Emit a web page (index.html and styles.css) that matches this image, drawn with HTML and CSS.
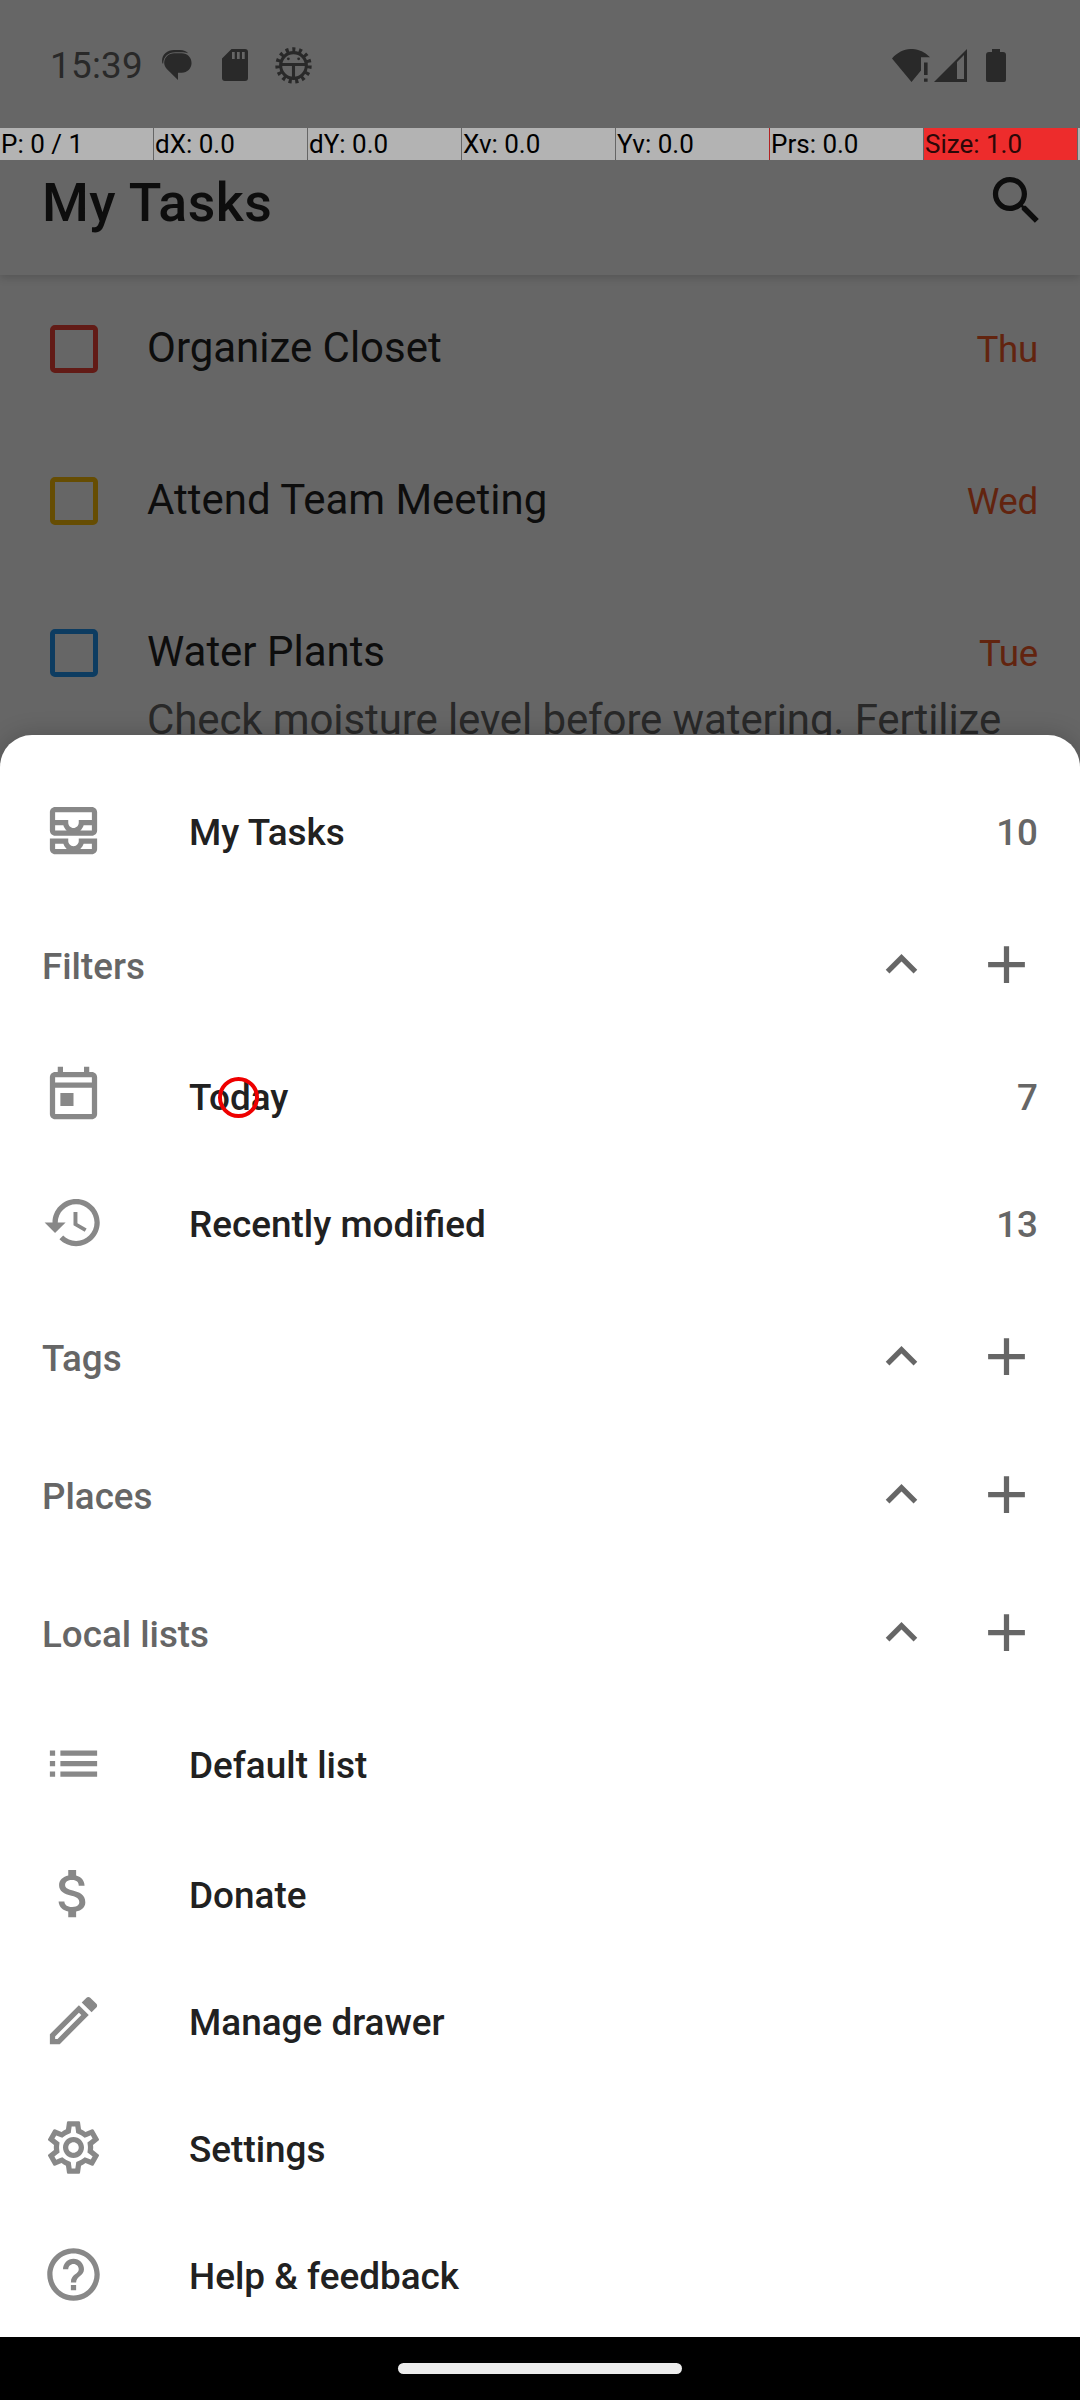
FILE: index.html
```html
<!DOCTYPE html>
<html lang="en">
<head>
<meta charset="utf-8">
<title>My Tasks</title>
<link rel="stylesheet" href="styles.css">
</head>
<body>
<svg width="0" height="0" class="defs">
  <symbol id="chevron" viewBox="0 0 24 24"><path d="M12 8l-6 6 1.410 1.410L12 10.830l4.590 4.580L18 14z"/></symbol>
  <symbol id="plus" viewBox="0 0 24 24"><path d="M19 13h-6v6h-2v-6H5v-2h6V5h2v6h6v2z"/></symbol>
</svg>
<div class="screen">
  <header class="status">
    <span class="clock">15:39</span>
    <svg class="st-chat" viewBox="0 0 32 33"><path d="M1 15C-1 7 5 1 13 1h6c4 0 7 1.500 8.500 3.500C25 3.600 23 3.400 21 3.400h-6.500C7 3.400 2 8 1.800 15z"/><path d="M13 4.500h8c5.500 0 10 4.300 10 10s-4.500 10-10 10h-4V32L5.500 20.500C3.800 18.700 2.800 16.500 2.800 14.500 2.800 8.800 7.500 4.500 13 4.500z"/></svg>
    <svg class="st-sd" viewBox="0 0 26 32"><path fill-rule="evenodd" d="M9.500 0H23a3 3 0 0 1 3 3v26a3 3 0 0 1-3 3H3a3 3 0 0 1-3-3V9.500zM10 3v7h2.700V3zM15 3v7h2.700V3zM20 3v7h2.700V3z"/></svg>
    <svg class="st-bug" viewBox="-18 -18 36 36"><circle class="teeth" r="15.500"/><circle class="ring" r="12.500"/><path class="bars" d="M-12 -1H12M0 -1V13"/><circle cx="-5" cy="-6.500" r="1.400"/><circle cx="5" cy="-6.500" r="1.400"/></svg>
    <span class="spacer"></span>
    <svg class="st-wifi" viewBox="0 0 38 33"><path d="M0 9.500C11-3 27-3 38 8.300h-9V21.500L19.500 33z"/><path d="M32 13.500h3.600v12.500H32zM32 29.500h3.600v3.300H32z"/></svg>
    <svg class="st-cell" viewBox="0 0 33 33"><path fill-rule="evenodd" d="M33 0v33H0zM23 13v17h7V6z"/></svg>
    <svg class="st-batt" viewBox="0 0 20 33"><path d="M6 0h8v3h3a3 3 0 0 1 3 3v25a2 2 0 0 1-2 2H2a2 2 0 0 1-2-2V6a3 3 0 0 1 3-3h3z"/></svg>
  </header>
  <div class="pointer">
    <span>P: 0 / 1</span><span>dX: 0.0</span><span>dY: 0.0</span><span>Xv: 0.0</span><span class="pressed">Yv: 0.0</span><span>Prs: 0.0</span><span class="size">Size: 1.0</span><i></i>
  </div>
  <div class="appbar">
    <h1>My Tasks</h1>
    <svg class="icon" viewBox="0 0 24 24"><path d="M15.500 14h-.79l-.28-.27C15.410 12.590 16 11.110 16 9.500 16 5.910 13.090 3 9.500 3S3 5.910 3 9.500 5.910 16 9.500 16c1.610 0 3.090-.59 4.230-1.570l.27.28v.79l5 4.990L20.490 19l-4.990-5zm-6 0C7.010 14 5 11.990 5 9.500S7.010 5 9.500 5 14 7.010 14 9.500 11.990 14 9.500 14z"/></svg>
  </div>
  <main class="tasks">
    <div class="task"><i class="box red"></i><p>Organize Closet</p><time>Thu</time></div>
    <div class="task"><i class="box yellow"></i><p>Attend Team Meeting</p><time>Wed</time></div>
    <div class="task"><i class="box blue"></i><p>Water Plants</p><time>Tue</time></div>
    <p class="note">Check moisture level before watering. Fertilize</p>
  </main>
  <nav class="sheet">
    <div class="item"><svg class="icon" viewBox="0 0 24 24"><path d="M19 3H5c-1.100 0-2 .9-2 2v7c0 1.100.9 2 2 2h14c1.100 0 2-.9 2-2V5c0-1.100-.9-2-2-2zM5 10h3.130c.21.78.67 1.470 1.270 2H5v-2zm14 2h-4.400c.6-.53 1.060-1.220 1.270-2H19v2zm0-4h-5v1c0 1.070-.93 2-2 2s-2-.93-2-2V8H5V5h14v3zm-5 7v1c0 .47-.19.9-.48 1.250-.37.45-.92.75-1.520.75s-1.150-.3-1.520-.75c-.29-.35-.48-.78-.48-1.250v-1H3v4c0 1.100.9 2 2 2h14c1.100 0 2-.9 2-2v-4h-7zm-9 2h3.130c.02.09.06.17.09.25.24.68.65 1.280 1.180 1.750H5v-2zm14 2h-4.400c.54-.47.95-1.070 1.180-1.750.03-.08.07-.16.09-.25H19v2z"/></svg><span>My Tasks</span><b>10</b></div>
    <div class="group"><span>Filters</span><svg class="icon"><use href="#chevron"/></svg><svg class="icon"><use href="#plus"/></svg></div>
    <div class="item"><svg class="icon" viewBox="0 0 24 24"><path d="M19 3h-1V1h-2v2H8V1H6v2H5c-1.110 0-2 .9-2 2v14c0 1.100.89 2 2 2h14c1.100 0 2-.9 2-2V5c0-1.100-.9-2-2-2zm0 16H5V9h14v10zm0-12H5V5h14v2zM7 11h5v5H7z"/></svg><span class="touched">Today</span><b>7</b></div>
    <div class="item"><svg class="icon" viewBox="0 0 24 24"><path d="M13 3c-4.970 0-9 4.030-9 9H1l3.890 3.890.07.14L9 12H6c0-3.870 3.130-7 7-7s7 3.130 7 7-3.130 7-7 7c-1.930 0-3.680-.79-4.940-2.060l-1.420 1.420C8.270 19.990 10.510 21 13 21c4.970 0 9-4.030 9-9s-4.030-9-9-9zm-1 5v5l4.280 2.540.72-1.210-3.500-2.080V8H12z"/></svg><span>Recently modified</span><b>13</b></div>
    <div class="group"><span>Tags</span><svg class="icon"><use href="#chevron"/></svg><svg class="icon"><use href="#plus"/></svg></div>
    <div class="group"><span>Places</span><svg class="icon"><use href="#chevron"/></svg><svg class="icon"><use href="#plus"/></svg></div>
    <div class="group"><span>Local lists</span><svg class="icon"><use href="#chevron"/></svg><svg class="icon"><use href="#plus"/></svg></div>
    <div class="item"><svg class="icon" viewBox="0 0 24 24"><path d="M3 13h2v-2H3v2zm0 4h2v-2H3v2zm0-8h2V7H3v2zm4 4h14v-2H7v2zm0 4h14v-2H7v2zM7 7v2h14V7H7z"/></svg><span>Default list</span></div>
    <div class="item footer-start"><svg class="icon" viewBox="0 0 24 24"><path d="M11.800 10.900c-2.270-.59-3-1.200-3-2.150 0-1.090 1.010-1.850 2.700-1.850 1.780 0 2.440.85 2.500 2.100h2.210c-.07-1.720-1.120-3.300-3.210-3.810V3h-3v2.160c-1.940.42-3.500 1.680-3.500 3.610 0 2.310 1.910 3.460 4.700 4.130 2.500.6 3 1.480 3 2.410 0 .69-.49 1.790-2.700 1.790-2.060 0-2.870-.92-2.980-2.100h-2.200c.12 2.190 1.760 3.420 3.680 3.830V21h3v-2.150c1.950-.37 3.500-1.500 3.500-3.550 0-2.840-2.430-3.810-4.700-4.400z"/></svg><span>Donate</span></div>
    <div class="item"><svg class="icon" viewBox="0 0 24 24"><path d="M14.060 9.020l.92.92L5.920 19H5v-.92l9.060-9.060M17.660 3c-.25 0-.51.1-.7.29l-1.830 1.830 3.750 3.750 1.830-1.830c.39-.39.39-1.020 0-1.410l-2.340-2.340c-.2-.2-.45-.29-.71-.29zm-3.600 3.190L3 17.250V21h3.750L17.810 9.940l-3.750-3.750z"/></svg><span>Manage drawer</span></div>
    <div class="item"><svg class="icon" viewBox="0 0 24 24"><path d="M19.430 12.980c.04-.32.07-.64.07-.98 0-.34-.03-.66-.07-.98l2.110-1.650c.19-.15.24-.42.12-.64l-2-3.460c-.09-.16-.26-.25-.44-.25-.06 0-.12.01-.17.03l-2.490 1c-.52-.4-1.080-.73-1.690-.98l-.38-2.650C14.460 2.180 14.250 2 14 2h-4c-.25 0-.46.18-.49.42l-.38 2.650c-.61.25-1.170.59-1.690.98l-2.490-1c-.06-.02-.12-.03-.18-.03-.17 0-.34.09-.43.25l-2 3.460c-.13.22-.07.49.12.64l2.110 1.650c-.04.32-.07.65-.07.98 0 .33.03.66.07.98l-2.110 1.650c-.19.15-.24.42-.12.64l2 3.460c.09.16.26.25.44.25.06 0 .12-.01.17-.03l2.490-1c.52.4 1.080.73 1.690.98l.38 2.650c.03.24.24.42.49.42h4c.25 0 .46-.18.49-.42l.38-2.650c.61-.25 1.170-.59 1.690-.98l2.490 1c.06.02.12.03.18.03.17 0 .34-.09.43-.25l2-3.460c.12-.22.07-.49-.12-.64l-2.110-1.650zm-1.980-1.710c.04.31.05.52.05.73 0 .21-.02.43-.05.73l-.14 1.130.89.7 1.080.84-.7 1.210-1.270-.51-1.040-.42-.9.68c-.43.32-.84.56-1.250.73l-1.060.43-.16 1.130-.2 1.350h-1.400l-.19-1.350-.16-1.130-1.060-.43c-.43-.18-.83-.41-1.230-.71l-.91-.7-1.060.43-1.270.51-.7-1.210 1.080-.84.89-.7-.14-1.130c-.03-.31-.05-.54-.05-.74s.02-.43.05-.73l.14-1.130-.89-.7-1.080-.84.7-1.210 1.270.51 1.040.42.9-.68c.43-.32.84-.56 1.250-.73l1.060-.43.16-1.130.2-1.350h1.390l.19 1.350.16 1.130 1.060.43c.43.18.83.41 1.230.71l.91.7 1.060-.43 1.270-.51.7 1.210-1.070.85-.89.7.14 1.130zM12 8c-2.210 0-4 1.790-4 4s1.790 4 4 4 4-1.790 4-4-1.790-4-4-4zm0 6c-1.100 0-2-.9-2-2s.9-2 2-2 2 .9 2 2-.9 2-2 2z"/></svg><span>Settings</span></div>
    <div class="item"><svg class="icon" viewBox="0 0 24 24"><path d="M11 18h2v-2h-2v2zm1-16C6.480 2 2 6.480 2 12s4.480 10 10 10 10-4.480 10-10S17.520 2 12 2zm0 18c-4.410 0-8-3.590-8-8s3.590-8 8-8 8 3.590 8 8-3.590 8-8 8zm0-14c-2.210 0-4 1.790-4 4h2c0-1.100.9-2 2-2s2 .9 2 2c0 2-3 1.750-3 5h2c0-2.250 3-2.500 3-5 0-2.210-1.790-4-4-4z"/></svg><span>Help &amp; feedback</span></div>
  </nav>
  <footer class="navbar"><i></i></footer>
</div>
</body>
</html>
```
FILE: styles.css
```css
* { box-sizing: border-box; margin: 0; }
body { background: #666; font-family: Roboto, sans-serif; }
.defs { display: none; }
.screen {
  width: 1080px; height: 2400px; overflow: hidden;
  display: flex; flex-direction: column; background: #666;
}
.icon { width: 63px; height: 63px; flex: none; display: block; }

.status {
  height: 128px; flex: none; display: flex; align-items: center;
  padding: 2px 74px 0 50px; color: #292929; fill: #292929;
}
.clock { font-size: 36.75px; line-height: 44px; width: 111px; padding-top: 2px; letter-spacing: .3px; }
.status svg { flex: none; display: block; }
.st-chat { width: 32px; height: 32px; }
.st-sd { width: 26px; height: 32px; margin-left: 29px; }
.st-bug { width: 37px; height: 37px; margin-left: 27px; }
.st-bug .teeth { fill: none; stroke: #292929; stroke-width: 4.4; stroke-dasharray: 3 3.49; }
.st-bug .ring, .st-bug .bars { fill: none; stroke: #292929; stroke-width: 3; }
.spacer { flex: 1; }
.st-wifi { width: 38px; height: 33px; }
.st-cell { width: 33px; height: 33px; margin-left: 4px; }
.st-batt { width: 20px; height: 33px; margin-left: 19px; }

.pointer { height: 32px; flex: none; display: flex; gap: 1px; position: relative; z-index: 1; }
.pointer span {
  width: 153px; background: #b3b3b3; color: #000;
  font-size: 26px; line-height: 32px; padding-left: 1px; white-space: nowrap;
}
.pointer i { flex: 1; background: #b3b3b3; }
.pointer .pressed { box-shadow: 1px 0 #b22222; }
.pointer .size { background: #ed2c2c; color: #2b0808; }

.appbar {
  height: 115px; flex: none; display: flex; justify-content: space-between;
  padding: 9px 32px 0 42px; box-shadow: 0 3px 8px rgba(0, 0, 0, .16); fill: #0d0d0d;
}
.appbar h1 {
  font-size: 53.6px; line-height: 62px; font-weight: 500; color: #0d0d0d;
  padding-top: 3px; letter-spacing: .5px;
}

.tasks { height: 460px; flex: none; overflow: hidden; padding: 0 42px; color: #0d0d0d; }
.task { height: 152px; display: flex; align-items: baseline; padding-top: 48px; }
.box {
  width: 48px; height: 48px; border: 5px solid; border-radius: 5px;
  margin: 2px 49px 0 8px; flex: none; align-self: flex-start;
}
.red { border-color: #621b16; }
.yellow { border-color: #664d03; }
.blue { border-color: #0d3c61; }
.task p { font-size: 42px; line-height: 50px; flex: 1; letter-spacing: -.02px; }
.task time { font-size: 36.75px; color: #62240f; letter-spacing: -.3px; }
.note {
  font-size: 42px; line-height: 50px; color: #292929; white-space: nowrap;
  margin: -36px 0 0 105px; letter-spacing: -.11px;
}

.sheet {
  height: 1602px; flex: none; overflow: hidden; background: #fff;
  border-radius: 32px 32px 0 0; padding-top: 32px;
  box-shadow: 0 0 24px rgba(0, 0, 0, .2);
  font-size: 36.75px; font-weight: 500; color: #212121;
}
.item { height: 127px; display: flex; align-items: center; padding: 0 42px; fill: #888; }
.item span { margin-left: 84px; flex: 1; font-size: 36.9px; }
.item b { font-weight: 500; color: #666; }
.item span, .item b, .group span { line-height: 44px; padding-top: 4px; }
.touched { position: relative; }
/* touch marker drawn over the pressed row */
.touched::after {
  content: ""; box-sizing: border-box; position: absolute; left: 29px; top: 5px;
  width: 41px; height: 41px; border: 4px solid #e00; border-radius: 50%;
}
.group { height: 138px; display: flex; align-items: center; gap: 42px; padding: 3px 42px 0; color: #666; fill: #666; }
.group span { flex: 1; }
.footer-start { margin-top: 3px; }

.navbar { height: 63px; flex: none; background: #000; display: flex; justify-content: center; padding-top: 26px; }
.navbar i { width: 284px; height: 11px; border-radius: 6px; background: #ececec; }
```
